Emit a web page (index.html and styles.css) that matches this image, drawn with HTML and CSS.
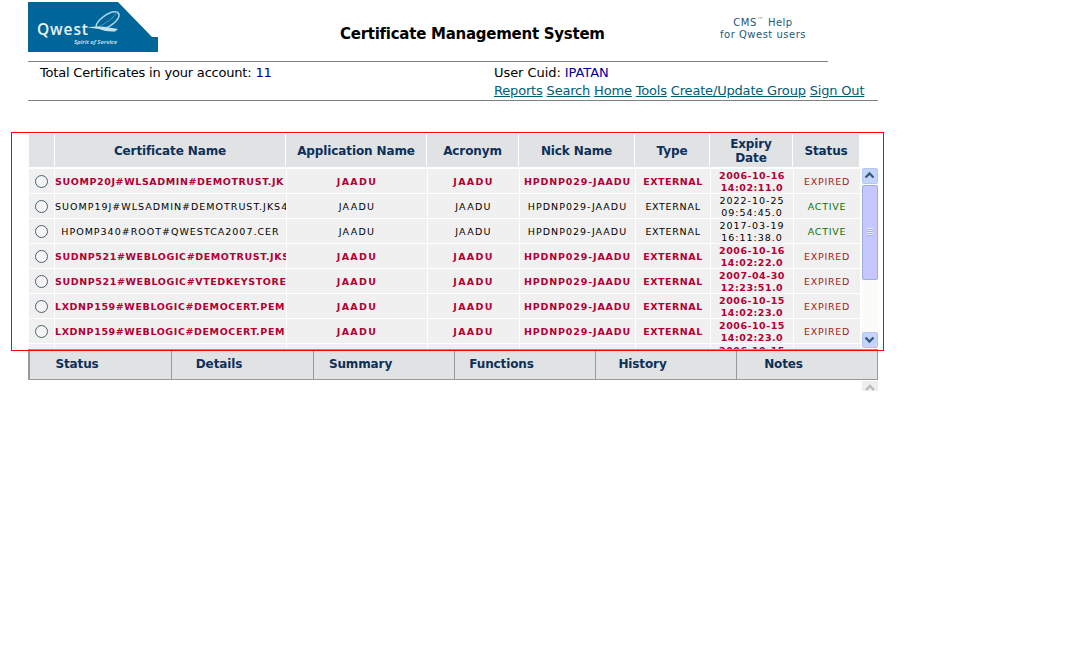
FILE: index.html
```html
<!DOCTYPE html>
<html lang="en">
<head>
<meta charset="utf-8">
<title>Certificate Management System</title>
<link rel="stylesheet" href="styles.css">
</head>
<body>
<header class="banner">
  <svg class="logo" width="130" height="50" viewBox="0 0 130 50">
    <path d="M0 0H90L124 35H130V50H0Z" fill="#006699"/>
    <text x="9" y="33" class="logo-name" textLength="51">Qwest</text>
    <text x="46" y="42" class="logo-tag" textLength="43">Spirit of Service</text>
    <path d="M68 26C67 19 82 8 89 10C96 14 84 25 74 27" fill="none" stroke="#a9d3e6" stroke-width="1.5"/>
    <path d="M70 25C77 22 87 15 89 10" fill="none" stroke="#4e9bbd" stroke-width=".9"/>
    <path d="M59 25.5Q70 23.5 81 25.5L90 27L87 29.5Q78 30 71 27Q66 26 59 25.5Z" fill="#c6e2ef"/>
  </svg>
  <h1 class="title">Certificate Management System</h1>
  <p class="help">CMS<sup>™</sup> Help<br>for Qwest users</p>
</header>
<section class="account">
  <p class="total">Total Certificates in your account: <b>11</b></p>
  <div class="user">
    <p>User Cuid: <b class="cuid">IPATAN</b></p>
    <nav class="links"><a>Reports</a> <a>Search</a> <a>Home</a> <a>Tools</a> <a>Create/Update Group</a> <a>Sign Out</a></nav>
  </div>
</section>
<main class="panel">
  <div class="grid head"><span></span><span>Certificate Name</span><span>Application Name</span><span>Acronym</span><span>Nick Name</span><span>Type</span><span>Expiry<br>Date</span><span>Status</span></div>
  <div class="viewport">
    <div class="rows" id="rows"></div>
    <div class="scrollbar">
      <div class="btn"><svg width="13" height="13" viewBox="0 0 13 13"><path d="M2.5 8.5L6.5 4.5L10.5 8.5" class="chev"/></svg></div>
      <div class="thumb"><i></i><i></i><i></i><i></i></div>
      <div class="btn down"><svg width="13" height="13" viewBox="0 0 13 13"><path d="M2.5 4.5L6.5 8.5L10.5 4.5" class="chev"/></svg></div>
    </div>
  </div>
  <div class="outline"></div>
</main>
<nav class="tabs"><span>Status</span><span>Details</span><span>Summary</span><span>Functions</span><span>History</span><span>Notes</span></nav>
<div class="stub"><svg width="16" height="10" viewBox="0 0 16 10"><path d="M4 9L8 5L12 9" class="chev off"/></svg></div>
<script src="rows.js"></script>
</body>
</html>
```
FILE: styles.css
```css
* { box-sizing: border-box; }
body { margin: 0; background: #fff; font-family: Verdana, "DejaVu Sans", sans-serif; font-size: 13px; color: #000; overflow: hidden; }
p, h1 { margin: 0; }
b { font-weight: normal; color: #000080; }
.banner { display: flex; width: 800px; height: 62px; margin-left: 28px; border-bottom: 1px solid #808080; }
.logo { margin-top: 2px; flex: none; }
.logo-name { font: 600 15.5px "Open Sans", sans-serif; fill: #e8f4f9; }
.logo-tag { font: italic bold 6px "Open Sans", sans-serif; fill: #b5d9e8; }
.title { width: 264px; margin: 24px 0 0 182px; font-size: 15px; line-height: 20px; white-space: nowrap; letter-spacing: -.26px; }
.help { width: 120px; margin: 17px 0 0 99px; font-size: 10px; line-height: 12px; text-align: center; color: #1f5873; letter-spacing: .5px; white-space: nowrap; }
.help sup { font-size: 7px; line-height: 0; color: #999; }
.account { display: flex; width: 850px; height: 39px; margin-left: 28px; padding-left: 12px; border-bottom: 1px solid #808080; line-height: 18px; white-space: nowrap; letter-spacing: -.2px; }
.total { width: 454px; padding-top: 2px; }
.user { padding-top: 2px; }
.user p { letter-spacing: -.06px; }
.cuid { color: #000099; }
.links { letter-spacing: -.18px; }
.links a { color: #005c75; text-decoration: underline; }
.panel { position: relative; height: 248px; padding: 33px 0 0 29px; }
.grid { display: grid; gap: 1px; text-align: center; }
.grid span { display: flex; align-items: center; justify-content: center; white-space: nowrap; overflow: hidden; }
.head { width: 830px; height: 33px; grid-template-columns: 25px 230px 140px 91px 115px 74px 82px 1fr; font-weight: bold; font-size: 12px; line-height: 14px; letter-spacing: -.12px; color: #0c3059; }
.head span { background: #e1e2e3; }
.viewport { display: flex; width: 849px; height: 181px; margin-top: 1px; overflow: hidden; }
.rows { width: 831px; padding-top: 1px; font-size: 9.5px; line-height: 12px; }
.row { height: 24px; margin-bottom: 1px; grid-template-columns: 25px 231px 140px 91px 115px 74px 82px 1fr; letter-spacing: 1px; }
.row span { padding-top: 1px; background: #f0f0f0; }
.row .name { justify-content: flex-start; }
.row .name.center { justify-content: center; }
.row .type { letter-spacing: .7px; }
.row .app { letter-spacing: 1.3px; }
.row .state { color: #a21c1c; font-weight: normal; letter-spacing: .75px; }
.row.active .state { color: #0a700a; }
.row.expired { color: #b00034; font-weight: bold; letter-spacing: .6px; }
.row.expired .nick { letter-spacing: .85px; }
.row.expired .type { letter-spacing: .5px; }
.row.expired .date { letter-spacing: .5px; }
.radio { width: 13px; height: 13px; border: 1px solid #49616b; border-radius: 50%; background: #f4f4f4; }
.scrollbar { width: 16px; height: 180px; margin-left: 2px; background: #fbfbf7; }
.btn { height: 16px; border: 1px solid #b5c6ee; border-radius: 2px; background: #c4d5fc; }
.btn svg { display: block; }
.chev { fill: none; stroke: #37597d; stroke-width: 2.3; }
.chev.off { stroke: #bbb; }
.thumb { height: 95px; margin: 1px 0 52px; padding: 42px 4px 0; border: 1px solid #9eafd8; border-radius: 2px; background: #c7c7ff; }
.thumb i { display: block; height: 1px; margin-bottom: 1px; background: #e8f1ff; box-shadow: 0 1px #a2aee2; }
.outline { position: absolute; left: 11px; top: 31px; width: 873px; height: 219px; border: 1px solid #f00; z-index: 2; }
.tabs { display: grid; grid-template-columns: 142px 142px 141px 141px 141px 1fr; width: 850px; height: 31px; margin-left: 28px; border: solid #999; border-width: 1px 1px 1px 2px; background: #e1e2e3; }
.tabs span { padding: 0 47px 0 0; border-right: 1px solid #999; text-align: center; font-weight: bold; font-size: 12px; letter-spacing: -.12px; line-height: 29px; color: #0c3059; }
.tabs span:last-child { border: 0; }
.stub { width: 16px; height: 10px; margin: 1px 0 0 862px; background: #eee; }
.stub svg { display: block; }
```
FILE: rows.js
```js
const data = [
  ['SUOMP20J#WLSADMIN#DEMOTRUST.JK', '2006-10-16', '14:02:11.0', 'EXPIRED'],
  ['SUOMP19J#WLSADMIN#DEMOTRUST.JKS4', '2022-10-25', '09:54:45.0', 'ACTIVE'],
  ['HPOMP340#ROOT#QWESTCA2007.CER', '2017-03-19', '16:11:38.0', 'ACTIVE'],
  ['SUDNP521#WEBLOGIC#DEMOTRUST.JKS', '2006-10-16', '14:02:22.0', 'EXPIRED'],
  ['SUDNP521#WEBLOGIC#VTEDKEYSTORE', '2007-04-30', '12:23:51.0', 'EXPIRED'],
  ['LXDNP159#WEBLOGIC#DEMOCERT.PEM', '2006-10-15', '14:02:23.0', 'EXPIRED'],
  ['LXDNP159#WEBLOGIC#DEMOCERT.PEM', '2006-10-15', '14:02:23.0', 'EXPIRED'],
  ['', '2006-10-15', '', '']
];
document.getElementById('rows').innerHTML = data.map(([name, date, time, state], i) => {
  const full = state !== '';
  return `<div class="grid row ${state === 'ACTIVE' ? 'active' : 'expired'}">
    <span>${full ? '<i class="radio"></i>' : ''}</span>
    <span class="name${i === 2 ? ' center' : ''}">${name}</span>
    <span class="app">${full ? 'JAADU' : ''}</span><span class="app">${full ? 'JAADU' : ''}</span>
    <span class="nick">${full ? 'HPDNP029-JAADU' : ''}</span><span class="type">${full ? 'EXTERNAL' : ''}</span>
    <span class="date">${date}<br>${time || '&nbsp;'}</span><span class="state">${state}</span></div>`;
}).join('');
```
